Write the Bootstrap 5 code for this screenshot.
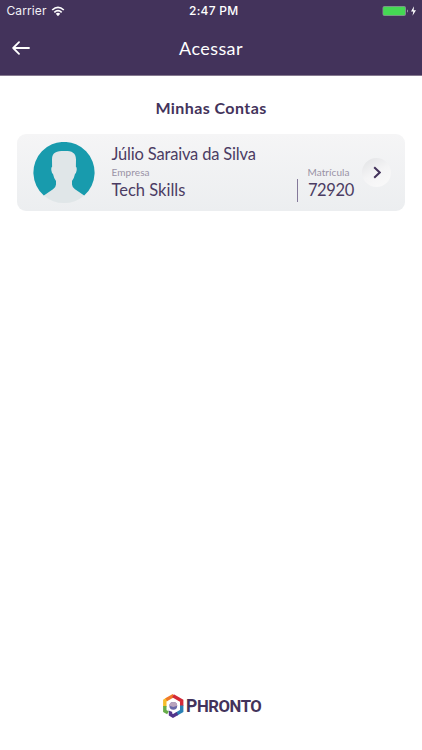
<!DOCTYPE html>
<html lang="pt-BR">
<head>
<meta charset="utf-8">
<meta name="viewport" content="width=device-width, initial-scale=1">
<title>Acessar</title>
<link href="https://cdn.jsdelivr.net/npm/bootstrap@5.3.0/dist/css/bootstrap.min.css" rel="stylesheet">
<style>
body{font-family:Lato,"Open Sans",sans-serif;color:#43335b;background:#fff;height:750px;overflow:hidden}
svg{display:block;flex:none}
.top-area{background:#43335b;height:75.5px;border-bottom:1px solid #85798f}
.status{height:22px;font:12px/22px Inter,sans-serif;padding:0 5px 0 6.5px;color:#f3f0f6}
.status>div{flex:1 1 0}
.carrier{letter-spacing:.1px}
.clock{font-weight:500;letter-spacing:.25px;text-align:center;color:#fff;padding-left:4px}
.title-bar{height:52px;padding:0 12px}
.title-bar h1{font-size:18px;line-height:24px;letter-spacing:.4px}
.side{width:18px}
.heading{font-size:16px;line-height:22px;letter-spacing:.42px;font-weight:700;margin:21px 0 15.5px}
.account{margin:0 17px;height:77px;border-radius:9px;background:linear-gradient(#f5f5f6,#eceef0);padding:0 14px 0 16px}
.info{margin-left:16.5px;padding-top:8.5px}
.big{font-size:16.5px;line-height:22px;white-space:nowrap;letter-spacing:-.18px;color:#4b3c63}
.company{letter-spacing:0}
.tiny{font-size:10px;line-height:13px;color:#9991a5;white-space:nowrap;letter-spacing:.1px;padding-top:1px}
.number{padding-top:30.5px;margin-right:8px}
.big.code{letter-spacing:-.35px;margin-left:.5px}
.rule{width:1.5px;height:23px;background:#84799a;margin:45px 9px 0 0}
.go{width:29px;height:29px;background:linear-gradient(150deg,#e3e4e6 5%,#f4f4f5 50%,#fafafa);margin-top:24px}
.brand{margin-bottom:31px;height:26px}
.wordmark{font:700 17.5px/26px Roboto,sans-serif;letter-spacing:-.45px;margin-left:1.5px}
.wordmark .caps{font-size:16.7px}
</style>
<script src="https://cdn.jsdelivr.net/npm/bootstrap@5.3.0/dist/js/bootstrap.bundle.min.js"></script>
</head>
<body class="d-flex flex-column">
<header class="top-area text-white">
  <div class="status d-flex align-items-center">
    <div class="d-flex align-items-center"><span class="carrier">Carrier</span>
      <svg class="ms-1" width="14" height="11" viewBox="0 0 14 11" fill="none" stroke="#fff" stroke-width="1.7"><path d="M1.2 4Q7-1.4 12.8 4M3.3 6.3Q7 2.9 10.7 6.3"/><path d="M4.8 7.8Q7 5.8 9.2 7.8L7 10.2Z" fill="#fff" stroke="none"/></svg>
    </div>
    <span class="clock">2:47 PM</span>
    <div class="d-flex align-items-center justify-content-end">
      <svg width="35" height="12" viewBox="0 0 35 12"><rect x=".5" y="1" width="23.5" height="10" rx="2" fill="#8a8296"/><rect x="1.2" y="1.7" width="22" height="8.6" rx="1.2" fill="#45d854"/><path d="M25 4.2Q26.8 6 25 7.8Z" fill="#c5bfca"/><path d="M32 1.2L29 6.6H31.3L30.5 10.8L34 5.2H31.6Z" fill="#fff"/></svg>
    </div>
  </div>
  <nav class="title-bar d-flex align-items-center justify-content-between">
    <a href="#" class="side" aria-label="Voltar"><svg width="18" height="14" viewBox="0 0 18 14" fill="none" stroke="#fff" stroke-width="1.8" stroke-linecap="round" stroke-linejoin="round"><path d="M17 7H1.5M7 1.2L1.2 7L7 12.8"/></svg></a>
    <h1 class="m-0 fw-normal">Acessar</h1>
    <span class="side"></span>
  </nav>
</header>
<main class="flex-grow-1">
  <h2 class="heading text-center">Minhas Contas</h2>
  <section class="account d-flex">
    <svg class="align-self-center" width="62" height="62" viewBox="0 0.5 62 62"><path d="M10.8 54A30.6 30.6 0 1 1 51.2 54Z" fill="#189bad"/><path d="M31 9.5C38 9.3 43 10.5 43 18L42.9 25.2Q44.1 26 43.6 29Q43.2 32 42 32.5Q41.2 36.5 39 39.5V43Q39.2 46 42 47.8L51.2 54A30.6 30.6 0 0 1 10.8 54L20 47.8Q22.8 46 23 43V39.5Q20.8 36.5 20 32.5Q18.8 32 18.4 29Q17.9 26 19.1 25.2L19 18C19 10.5 24 9.5 31 9.5Z" fill="#e0e6e8"/></svg>
    <div class="info flex-grow-1">
      <div class="big">Júlio Saraiva da Silva</div>
      <div class="tiny">Empresa</div>
      <div class="big company">Tech Skills</div>
    </div>
    <div class="rule"></div>
    <div class="number"><div class="tiny">Matrícula</div><div class="big code">72920</div></div>
    <a href="#" class="go rounded-circle d-flex align-items-center justify-content-center" aria-label="Abrir conta"><svg width="9" height="13" viewBox="0 0 9 13" fill="none" stroke="#43335b" stroke-width="2"><path d="M2.2 1.2L7.7 6.5L2.2 11.8"/></svg></a>
  </section>
</main>
<footer class="brand d-flex justify-content-center align-items-center">
  <svg width="24" height="26" viewBox="0 0 24 26">
    <g fill="none" stroke-width="3.4"><path d="M3.8 14V7.6L6 6.3" stroke="#f6bd29"/><path d="M5.2 6.8L12.6 2.6" stroke="#f07a2a"/><path d="M12 2.7L20.7 7.7V13" stroke="#d32a38"/><path d="M20.7 12.5V18L15.5 21" stroke="#2b80b5"/><path d="M16.4 20.5L12 23L9.5 21.5V16" stroke="#51358b"/><path d="M3.8 13V18L7 19.9" stroke="#67ad49"/></g>
    <circle cx="12.3" cy="12.8" r="6.2" fill="#fff"/><circle cx="12.3" cy="12.8" r="3.9" fill="#6a68a8"/><path d="M8.4 12.8A3.9 3.9 0 0 1 16.2 12.8L12.3 14Z" fill="#b9a3bd"/>
  </svg>
  <div class="wordmark">P<span class="caps">HRONTO</span></div>
</footer>
</body>
</html>
